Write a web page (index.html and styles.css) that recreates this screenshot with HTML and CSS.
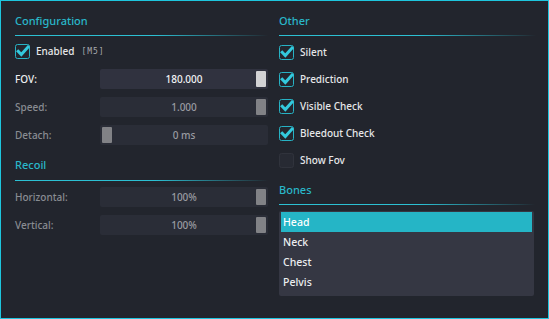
FILE: index.html
```html
<!DOCTYPE html>
<html>
<head>
<meta charset="utf-8">
<link rel="stylesheet" href="styles.css">
</head>
<body>
<div class="window">
  <div class="col col-left">
    <div class="heading">Configuration</div>
    <div class="sep"></div>
    <div class="check-row first-check">
      <svg class="cb" width="15" height="15" viewBox="0 0 15 15"><rect x="0.5" y="0.5" width="14" height="14" rx="2" fill="#23262e" stroke="#27b2c4"/><path d="M3.2 7.4 L6.3 10.6 L13 3" fill="none" stroke="#33c9dd" stroke-width="3" stroke-linecap="square"/></svg>
      <span class="lbl">Enabled</span><span class="key">[M5]</span>
    </div>
    <div class="slider-row fov">
      <span class="slbl on">FOV:</span>
      <div class="slider hot"><span class="sval on">180.000</span><div class="grab grab-r bright"></div></div>
    </div>
    <div class="slider-row">
      <span class="slbl">Speed:</span>
      <div class="slider"><span class="sval">1.000</span><div class="grab grab-r"></div></div>
    </div>
    <div class="slider-row">
      <span class="slbl">Detach:</span>
      <div class="slider"><span class="sval">0 ms</span><div class="grab grab-l"></div></div>
    </div>
    <div class="heading heading2">Recoil</div>
    <div class="sep sep2"></div>
    <div class="slider-row recoil-first">
      <span class="slbl">Horizontal:</span>
      <div class="slider"><span class="sval">100%</span><div class="grab grab-r"></div></div>
    </div>
    <div class="slider-row">
      <span class="slbl">Vertical:</span>
      <div class="slider"><span class="sval">100%</span><div class="grab grab-r"></div></div>
    </div>
  </div>
  <div class="col col-right">
    <div class="heading">Other</div>
    <div class="sep"></div>
    <div class="checks">
      <div class="check-row">
        <svg class="cb" width="15" height="15" viewBox="0 0 15 15"><rect x="0.5" y="0.5" width="14" height="14" rx="2" fill="#23262e" stroke="#27b2c4"/><path d="M3.2 7.4 L6.3 10.6 L13 3" fill="none" stroke="#33c9dd" stroke-width="3" stroke-linecap="square"/></svg>
        <span class="lbl">Silent</span>
      </div>
      <div class="check-row">
        <svg class="cb" width="15" height="15" viewBox="0 0 15 15"><rect x="0.5" y="0.5" width="14" height="14" rx="2" fill="#23262e" stroke="#27b2c4"/><path d="M3.2 7.4 L6.3 10.6 L13 3" fill="none" stroke="#33c9dd" stroke-width="3" stroke-linecap="square"/></svg>
        <span class="lbl">Prediction</span>
      </div>
      <div class="check-row">
        <svg class="cb" width="15" height="15" viewBox="0 0 15 15"><rect x="0.5" y="0.5" width="14" height="14" rx="2" fill="#23262e" stroke="#27b2c4"/><path d="M3.2 7.4 L6.3 10.6 L13 3" fill="none" stroke="#33c9dd" stroke-width="3" stroke-linecap="square"/></svg>
        <span class="lbl">Visible Check</span>
      </div>
      <div class="check-row">
        <svg class="cb" width="15" height="15" viewBox="0 0 15 15"><rect x="0.5" y="0.5" width="14" height="14" rx="2" fill="#23262e" stroke="#27b2c4"/><path d="M3.2 7.4 L6.3 10.6 L13 3" fill="none" stroke="#33c9dd" stroke-width="3" stroke-linecap="square"/></svg>
        <span class="lbl">Bleedout Check</span>
      </div>
      <div class="check-row">
        <svg class="cb" width="15" height="15" viewBox="0 0 15 15"><rect x="0.5" y="0.5" width="14" height="14" rx="2" fill="#272a33" stroke="#30333c"/></svg>
        <span class="lbl">Show Fov</span>
      </div>
    </div>
    <div class="heading heading3">Bones</div>
    <div class="sep sep3"></div>
    <div class="listbox">
      <div class="item selected">Head</div>
      <div class="item">Neck</div>
      <div class="item">Chest</div>
      <div class="item">Pelvis</div>
    </div>
  </div>
</div>
</body>
</html>
```

FILE: styles.css
```css
* { box-sizing: border-box; }
html, body { margin: 0; padding: 0; background: #22252d; }
body { font-family: "Noto Sans", "DejaVu Sans", sans-serif; font-size: 10px; font-weight: 500; color: #e6e7e9; }

.window {
  width: 549px;
  height: 319px;
  border: 1px solid #1ec6de;
  background: #22252d;
  display: flex;
  gap: 11px;
  padding: 12px 12px 0 14px;
}

.col { display: flex; flex-direction: column; }
.col-left { width: 253px; }
.col-right { width: 257px; }

.heading {
  height: 16px;
  line-height: 16px;
  font-size: 11px;
  color: #29b7c9;
}

.sep {
  height: 1px;
  margin-top: 6px;
  background: linear-gradient(to right, #2cc0d3 0%, #2cc0d3 55%, rgba(41,183,201,0.15) 95%, rgba(41,183,201,0) 100%);
}

.check-row {
  height: 15px;
  display: flex;
  align-items: center;
}
.cb { flex: none; display: block; }
.lbl { margin-left: 6px; line-height: 15px; }
.key {
  margin-left: 7px;
  font-family: "DejaVu Sans Mono", monospace;
  font-size: 8px;
  font-weight: 400;
  letter-spacing: 1px;
  color: #a9abb0;
}
.first-check { margin-top: 8px; }

.slider-row {
  height: 20px;
  display: flex;
  align-items: center;
  margin-top: 8px;
}
.fov { margin-top: 10px; }
.slbl { width: 85px; color: #898c92; }
.slbl.on { color: #eceef0; }
.slider {
  width: 168px;
  height: 20px;
  border-radius: 2px;
  background: #2a2d37;
  display: flex;
  align-items: center;
  justify-content: center;
  position: relative;
}
.slider.hot { background: #30323f; }
.sval { color: #9a9ca2; }
.sval.on { color: #f2f3f5; }
.grab {
  position: absolute;
  top: 2px;
  width: 10px;
  height: 16px;
  border-radius: 1px;
  background: #818286;
}
.grab.bright { background: #d2d2d4; }
.grab-r { right: 2px; }
.grab-l { left: 2px; }

.heading2 { margin-top: 12px; }
.sep2 { margin-top: 7px; }
.recoil-first { margin-top: 6px; }

.checks {
  display: flex;
  flex-direction: column;
  gap: 12px;
  margin-top: 9px;
}

.heading3 { margin-top: 14px; }
.sep3 { margin-top: 6px; width: 256px; }

.listbox {
  margin-top: 6px;
  width: 255px;
  height: 85px;
  background: #353743;
  border-radius: 2px;
  padding: 1px 2px;
}
.item {
  height: 20px;
  line-height: 20px;
  padding-left: 2px;
  color: #eceef0;
  font-size: 10.5px;
}
.item.selected { background: #25b5c6; color: #ffffff; }
```
